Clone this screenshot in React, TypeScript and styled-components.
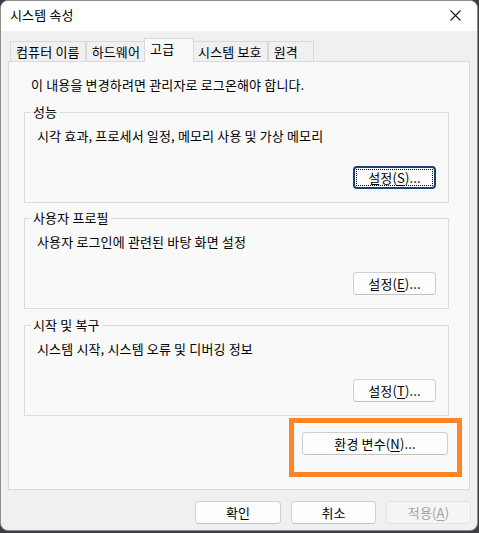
import React from "react";
import styled, { createGlobalStyle, css } from "styled-components";

const Global = createGlobalStyle`
  html, body {
    margin: 0;
    padding: 0;
    background: #3b3d44;
  }
  body {
    font-family: "Noto Sans CJK KR", "Noto Sans", sans-serif;
    font-size: 13px;
    letter-spacing: 0.15px;
    color: #000;
  }
  * { box-sizing: border-box; }
`;

const Screen = styled.div`
  width: 479px;
  height: 533px;
  overflow: hidden;
`;

const Window = styled.div`
  width: 478px;
  height: 531px;
  border: 1px solid #8d8d8d;
  border-radius: 8px;
  overflow: hidden;
  display: flex;
  flex-direction: column;
  background: #f0f0f0;
`;

const TitleBar = styled.div`
  height: 30px;
  flex: none;
  background: #ffffff;
  display: flex;
  align-items: center;
  justify-content: space-between;
  padding: 0 0 2px 9px;
`;

const Title = styled.span`
  line-height: 16px;
`;

const CloseButton = styled.div`
  width: 40px;
  height: 28px;
  display: flex;
  align-items: center;
  justify-content: center;
  margin-right: 2px;
`;

const Body = styled.div`
  flex: 1;
  display: flex;
  flex-direction: column;
  padding: 8px 7px 0 7px;
`;

const TabList = styled.div`
  display: flex;
  align-items: flex-end;
  padding-left: 2px;
  height: 23px;
  margin-bottom: -1px;
  position: relative;
  z-index: 1;
`;

const Tab = styled.div<{ $active?: boolean }>`
  min-width: 46px;
  height: 20px;
  padding: 0 5px;
  border: 1px solid #d9d9d9;
  border-bottom: none;
  background: #f0f0f0;
  display: flex;
  align-items: center;
  line-height: 16px;
  white-space: nowrap;
  margin-bottom: 1px;
  ${(p) =>
    p.$active &&
    css`
      min-width: 50px;
      height: 24px;
      margin: 0 -2px;
      background: #f9f9f9;
      padding-bottom: 4px;
      position: relative;
      z-index: 2;
    `}
`;

const Panel = styled.div`
  height: 429px;
  width: 462px;
  flex: none;
  border: 1px solid #dadada;
  background: #f9f9f9;
  padding: 15px 20px 0 15px;
  display: flex;
  flex-direction: column;
`;

const Note = styled.div`
  line-height: 16px;
  margin-left: 7px;
`;

const Group = styled.section<{ $gap: number }>`
  margin-top: ${(p) => p.$gap}px;
  padding: 0 12px 13px 12px;
  border: 1px solid #dcdcdc;
  display: flex;
  flex-direction: column;
`;

const Legend = styled.div`
  align-self: flex-start;
  margin: -9px 0 0 -6px;
  padding: 0 2px;
  line-height: 16px;
  background: #f9f9f9;
`;

const Desc = styled.div`
  line-height: 16px;
  margin-top: 8px;
`;

const Button = styled.button<{ $width?: number; $focused?: boolean }>`
  font-family: inherit;
  font-size: 13px;
  letter-spacing: inherit;
  color: #000;
  width: ${(p) => p.$width ?? 85}px;
  height: 23px;
  padding: 0;
  background: #fdfdfd;
  border: 1px solid #d0d0d0;
  border-bottom-color: #c2c2c2;
  border-radius: 4px;
  line-height: 16px;
  display: flex;
  align-items: center;
  justify-content: center;
  ${(p) =>
    p.$focused &&
    css`
      border: 2px solid #1a3f73;
      outline: 1px dotted #000;
      outline-offset: -4px;
    `}
  &:disabled {
    color: #a0a0a0;
    background: #f5f5f5;
    border-color: #e3e3e3;
  }
  u {
    text-underline-offset: 2px;
  }
`;

const GroupButton = styled(Button)`
  align-self: flex-end;
  margin-top: 22px;
`;

const EnvRow = styled.div`
  position: relative;
  display: flex;
  justify-content: flex-end;
  margin-top: 16px;
  padding-right: 1px;
`;

const Highlight = styled.div`
  position: absolute;
  top: -14px;
  right: -13px;
  width: 173px;
  height: 59px;
  border: 5px solid #ff8426;
  pointer-events: none;
`;

const Footer = styled.div`
  display: flex;
  justify-content: flex-end;
  gap: 10px;
  margin-top: 11px;
  margin-right: -1px;
`;

type GroupData = { legend: string; desc: string; key: string; focused?: boolean; gap: number };

const groups: GroupData[] = [
  { legend: "성능", desc: "시각 효과, 프로세서 일정, 메모리 사용 및 가상 메모리", key: "S", focused: true, gap: 19 },
  { legend: "사용자 프로필", desc: "사용자 로그인에 관련된 바탕 화면 설정", key: "E", gap: 15 },
  { legend: "시작 및 복구", desc: "시스템 시작, 시스템 오류 및 디버깅 정보", key: "T", gap: 16 },
];

const tabs = ["컴퓨터 이름", "하드웨어", "고급", "시스템 보호", "원격"];

export default function App() {
  return (
    <>
      <Global />
      <Screen>
        <Window>
          <TitleBar>
            <Title>시스템 속성</Title>
            <CloseButton>
              <svg width="11" height="11" viewBox="0 0 11 11">
                <path d="M0.5 0.5 L10.5 10.5 M10.5 0.5 L0.5 10.5" stroke="#1a1a1a" strokeWidth="1.1" fill="none" />
              </svg>
            </CloseButton>
          </TitleBar>
          <Body>
            <TabList>
              {tabs.map((t) => (
                <Tab key={t} $active={t === "고급"}>
                  {t}
                </Tab>
              ))}
            </TabList>
            <Panel>
              <Note>이 내용을 변경하려면 관리자로 로그온해야 합니다.</Note>
              {groups.map((g) => (
                <Group key={g.legend} $gap={g.gap}>
                  <Legend>{g.legend}</Legend>
                  <Desc>{g.desc}</Desc>
                  <GroupButton $width={83} $focused={g.focused}>
                    설정(<u>{g.key}</u>)...
                  </GroupButton>
                </Group>
              ))}
              <EnvRow>
                <Highlight />
                <Button $width={146}>
                  환경 변수(<u>N</u>)...
                </Button>
              </EnvRow>
            </Panel>
            <Footer>
              <Button $width={86}>확인</Button>
              <Button>취소</Button>
              <Button disabled>
                적용(<u>A</u>)
              </Button>
            </Footer>
          </Body>
        </Window>
      </Screen>
    </>
  );
}
